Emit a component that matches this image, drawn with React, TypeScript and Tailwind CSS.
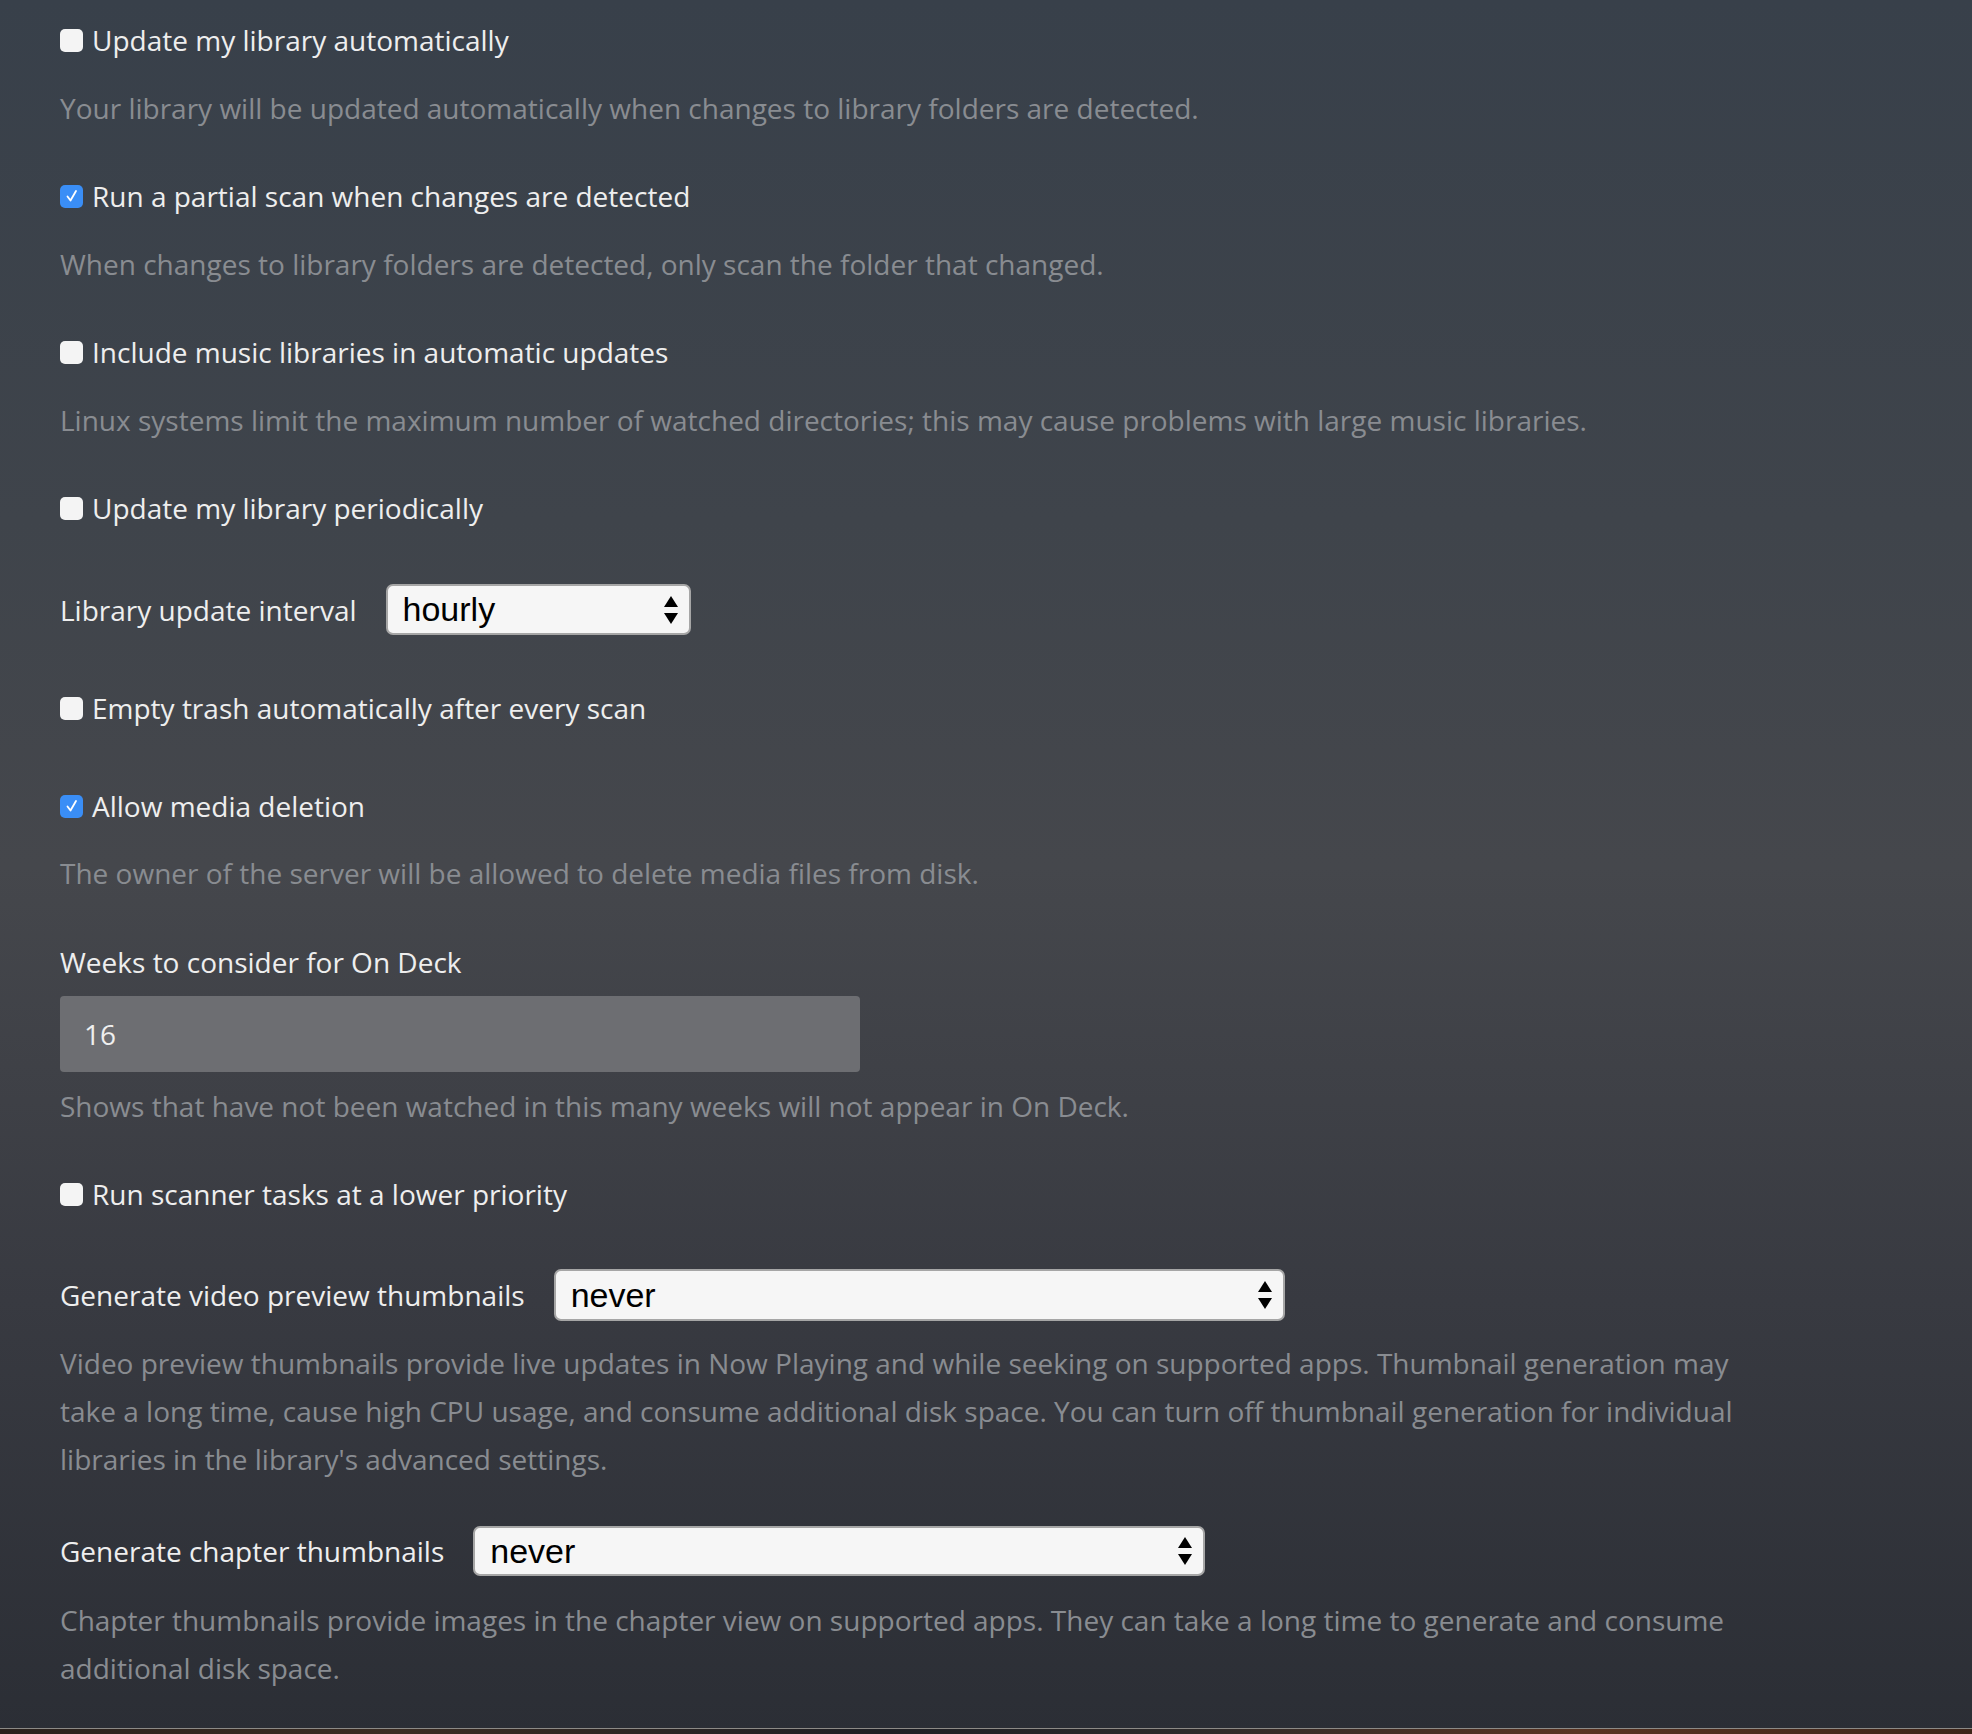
import type { ReactNode } from 'react'

const font = { fontFamily: '"Open Sans", "Noto Sans", sans-serif' }

function Box({ checked }: { checked?: boolean }) {
  if (checked) {
    return (
      <span className="flex h-[23px] w-[23px] shrink-0 items-center justify-center rounded-[5px] bg-[#3a8ef6]">
        <svg viewBox="0 0 16 16" className="h-[16px] w-[16px]" fill="none" stroke="white" strokeWidth="1.8" strokeLinecap="round" strokeLinejoin="round">
          <path d="M3.5 8.5 L6.5 12.5 L12 3" />
        </svg>
      </span>
    )
  }
  return <span className="h-[23px] w-[23px] shrink-0 rounded-[5px] bg-[#f4f4f4]" />
}

function Check({ label, checked, className = '' }: { label: string; checked?: boolean; className?: string }) {
  return (
    <div className={`flex h-[48px] items-center gap-[9px] text-[28px] text-[#eeeeee] ${className}`}>
      <Box checked={checked} />
      <span className="leading-[48px]">{label}</span>
    </div>
  )
}

function Help({ children, className = '' }: { children: ReactNode; className?: string }) {
  return <p className={`w-[1720px] text-[28px] leading-[48px] text-[#898c91] ${className}`}>{children}</p>
}

function Arrows() {
  return (
    <svg viewBox="0 0 14 28" className="h-[28px] w-[14px]" fill="black">
      <path d="M7 0 L14 11 L0 11 Z" />
      <path d="M0 17 L14 17 L7 28 Z" />
    </svg>
  )
}

function SelectRow({ label, value, width, height, className = '' }: { label: string; value: string; width: string; height: string; className?: string }) {
  return (
    <div className={`flex items-center gap-[29px] ${className}`}>
      <span className="text-[28px] leading-[48px] text-[#eeeeee]">{label}</span>
      <div className={`flex ${width} ${height} items-center justify-between rounded-[7px] border-2 border-[#a6a6a6] bg-[#f6f6f6] pl-[15px] pr-[11px]`}>
        <span className="text-[34px] text-black" style={{ fontFamily: '"Liberation Sans", Arial, sans-serif' }}>{value}</span>
        <Arrows />
      </div>
    </div>
  )
}

export default function App() {
  return (
    <div style={font} className="flex min-h-[1734px] w-full flex-col bg-[linear-gradient(180deg,#38404a_0%,#3f444b_30%,#45474c_50%,#383a41_75%,#2b2e35_100%)]">
      <div className="h-[1728px] pl-[60px] pt-[16px]">
        <Check label="Update my library automatically" />
        <Help className="mt-[20px]">Your library will be updated automatically when changes to library folders are detected.</Help>

        <Check label="Run a partial scan when changes are detected" checked className="mt-[40px]" />
        <Help className="mt-[20px]">When changes to library folders are detected, only scan the folder that changed.</Help>

        <Check label="Include music libraries in automatic updates" className="mt-[40px]" />
        <Help className="mt-[20px]">Linux systems limit the maximum number of watched directories; this may cause problems with large music libraries.</Help>

        <Check label="Update my library periodically" className="mt-[40px]" />

        <SelectRow label="Library update interval" value="hourly" width="w-[305px]" height="h-[51px]" className="mt-[52px]" />

        <Check label="Empty trash automatically after every scan" className="mt-[49px]" />

        <Check label="Allow media deletion" checked className="mt-[50px]" />
        <Help className="mt-[19px]">The owner of the server will be allowed to delete media files from disk.</Help>

        <div className="mt-[41px] text-[28px] leading-[48px] text-[#eeeeee]">Weeks to consider for On Deck</div>
        <div className="mt-[10px] flex h-[76px] w-[800px] items-center rounded-[4px] bg-[#6d6e72] pl-[24px] text-[28px] text-[#efefef]">16</div>
        <Help className="mt-[10px]">Shows that have not been watched in this many weeks will not appear in On Deck.</Help>

        <Check label="Run scanner tasks at a lower priority" className="mt-[40px]" />

        <SelectRow label="Generate video preview thumbnails" value="never" width="w-[731px]" height="h-[52px]" className="mt-[51px]" />
        <Help className="mt-[18px]">
          Video preview thumbnails provide live updates in Now Playing and while seeking on supported apps. Thumbnail generation may take a long time, cause high CPU usage, and consume additional disk space. You can turn off thumbnail generation for individual libraries in the library's advanced settings.
        </Help>

        <SelectRow label="Generate chapter thumbnails" value="never" width="w-[732px]" height="h-[50px]" className="mt-[43px]" />
        <Help className="mt-[20px]">
          Chapter thumbnails provide images in the chapter view on supported apps. They can take a long time to generate and consume additional disk space.
        </Help>
      </div>
      <div className="h-px bg-[#8c8a86]" />
      <div className="h-[5px] bg-[linear-gradient(90deg,#2a211c_0%,#3b2c22_20%,#1e1f24_45%,#2c2a2a_60%,#5a3422_80%,#3c2418_100%)]" />
    </div>
  )
}
